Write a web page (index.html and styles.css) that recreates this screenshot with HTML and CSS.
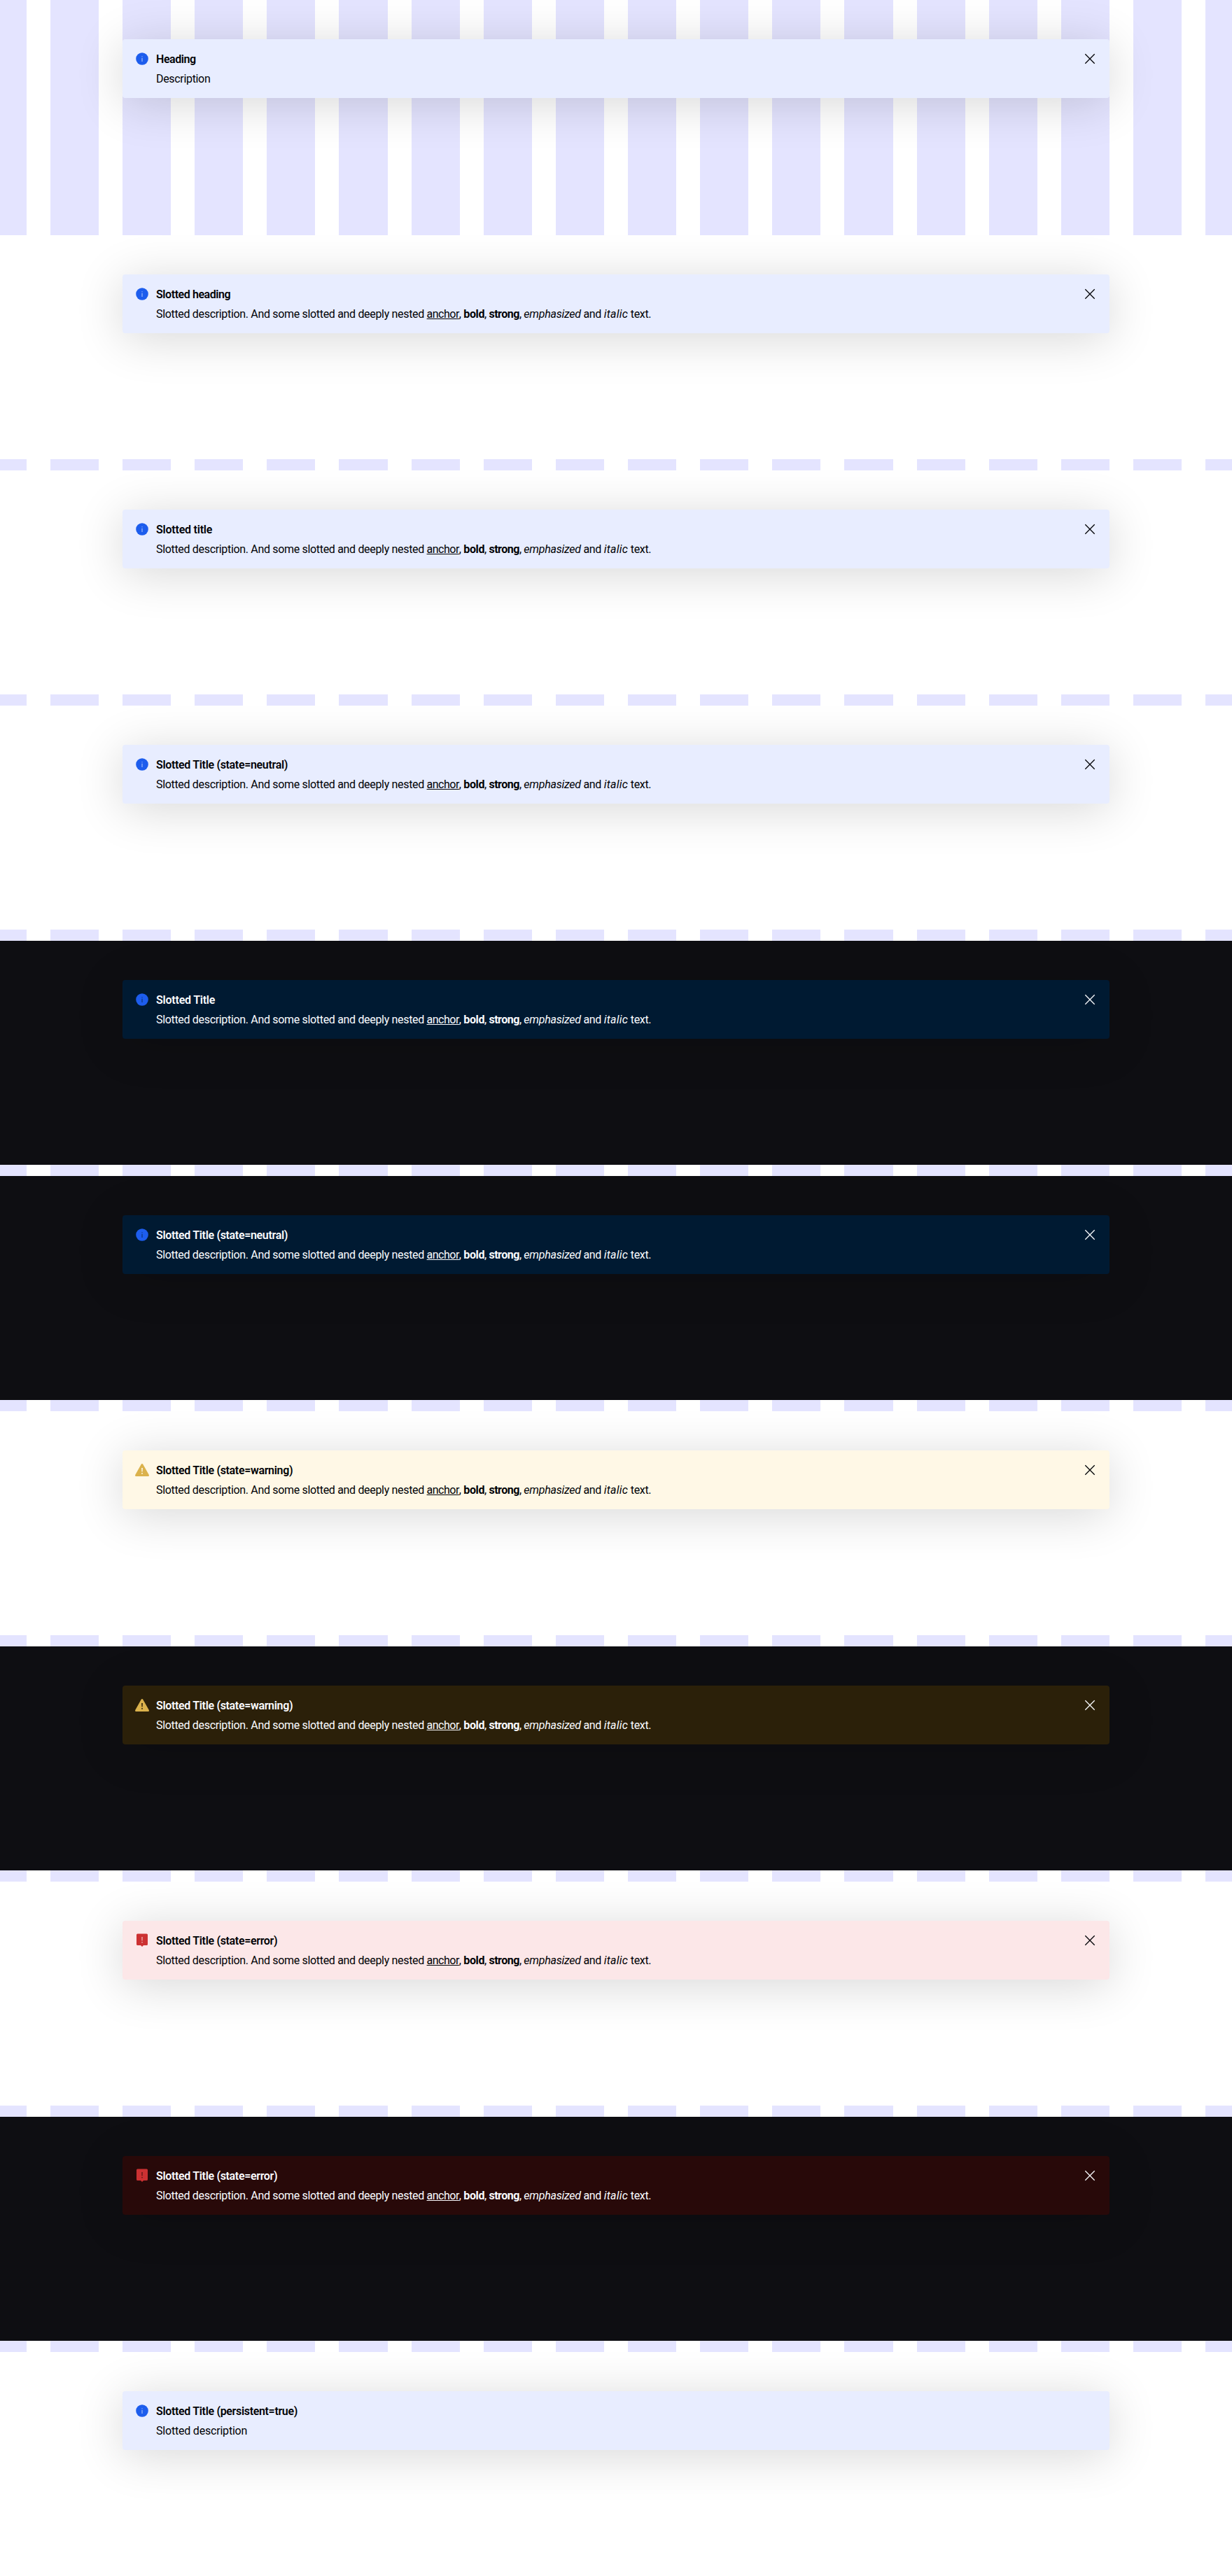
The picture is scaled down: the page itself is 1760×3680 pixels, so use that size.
FILE: index.html
```
<!DOCTYPE html>
<html lang="en">
<head>
<meta charset="utf-8">
<title>Banner</title>
<link rel="stylesheet" href="styles.css">
</head>
<body>
<svg class="sprite" aria-hidden="true">
  <symbol id="info" viewBox="0 0 24 24"><circle cx="12" cy="12" r="8.8"/><path class="mark thin" d="M11.500 10.700h1V16h-1zM11.500 8.200h1v1.100h-1z"/></symbol>
  <symbol id="warning" viewBox="0 0 24 24"><path d="M12 3q.8 0 1.200.7L21.800 19q.5 1.200-.5 2H2.700q-1-.8-.5-2L10.800 3.700Q11.200 3 12 3z"/><path class="mark" d="M11.100 9h1.800l-.3 5.500h-1.200zM11.200 16h1.600v1.700h-1.600z"/></symbol>
  <symbol id="error" viewBox="0 0 24 24"><path d="M5.500 2.500h13q1.500 0 1.500 1.500v13.500q0 1.500-1.500 1.500H14l-2 2-2-2H5.500Q4 19 4 17.500V4q0-1.500 1.500-1.500z"/><path class="mark" d="M11.500 7h1l-.1 5.500h-.8zM11.500 14h1v1.500h-1z"/></symbol>
  <symbol id="close" viewBox="0 0 24 24"><path d="M5.300 5.300 18.700 18.700M18.700 5.300 5.300 18.700" fill="none" stroke="currentColor" stroke-width="1.300"/></symbol>
</svg>
<div class="columns" aria-hidden="true"><i></i><i></i><i></i><i></i><i></i><i></i><i></i><i></i><i></i><i></i><i></i><i></i><i></i><i></i><i></i><i></i><i></i><i></i></div>
<main class="page">
  <section class="playground">
    <div class="banner neutral">
      <svg class="icon"><use href="#info"/></svg>
      <div class="text"><h5 class="title tight">Heading</h5><p class="description">Description</p></div>
      <button class="close" aria-label="Close"><svg class="icon"><use href="#close"/></svg></button>
    </div>
  </section>
  <section class="playground light">
    <div class="banner neutral">
      <svg class="icon"><use href="#info"/></svg>
      <div class="text"><h5 class="title tight">Slotted heading</h5><p class="description">Slotted description. And some slotted and deeply nested <a>anchor</a>, <b>bold</b>, <strong>strong</strong>, <em>emphasized</em> and <i>italic</i> text.</p></div>
      <button class="close" aria-label="Close"><svg class="icon"><use href="#close"/></svg></button>
    </div>
  </section>
  <section class="playground light">
    <div class="banner neutral">
      <svg class="icon"><use href="#info"/></svg>
      <div class="text"><h5 class="title loose">Slotted title</h5><p class="description">Slotted description. And some slotted and deeply nested <a>anchor</a>, <b>bold</b>, <strong>strong</strong>, <em>emphasized</em> and <i>italic</i> text.</p></div>
      <button class="close" aria-label="Close"><svg class="icon"><use href="#close"/></svg></button>
    </div>
  </section>
  <section class="playground light">
    <div class="banner neutral">
      <svg class="icon"><use href="#info"/></svg>
      <div class="text"><h5 class="title">Slotted Title (state=neutral)</h5><p class="description">Slotted description. And some slotted and deeply nested <a>anchor</a>, <b>bold</b>, <strong>strong</strong>, <em>emphasized</em> and <i>italic</i> text.</p></div>
      <button class="close" aria-label="Close"><svg class="icon"><use href="#close"/></svg></button>
    </div>
  </section>
  <section class="playground dark">
    <div class="banner neutral">
      <svg class="icon"><use href="#info"/></svg>
      <div class="text"><h5 class="title loose">Slotted Title</h5><p class="description">Slotted description. And some slotted and deeply nested <a>anchor</a>, <b>bold</b>, <strong>strong</strong>, <em>emphasized</em> and <i>italic</i> text.</p></div>
      <button class="close" aria-label="Close"><svg class="icon"><use href="#close"/></svg></button>
    </div>
  </section>
  <section class="playground dark">
    <div class="banner neutral">
      <svg class="icon"><use href="#info"/></svg>
      <div class="text"><h5 class="title">Slotted Title (state=neutral)</h5><p class="description">Slotted description. And some slotted and deeply nested <a>anchor</a>, <b>bold</b>, <strong>strong</strong>, <em>emphasized</em> and <i>italic</i> text.</p></div>
      <button class="close" aria-label="Close"><svg class="icon"><use href="#close"/></svg></button>
    </div>
  </section>
  <section class="playground light">
    <div class="banner warning">
      <svg class="icon"><use href="#warning"/></svg>
      <div class="text"><h5 class="title">Slotted Title (state=warning)</h5><p class="description">Slotted description. And some slotted and deeply nested <a>anchor</a>, <b>bold</b>, <strong>strong</strong>, <em>emphasized</em> and <i>italic</i> text.</p></div>
      <button class="close" aria-label="Close"><svg class="icon"><use href="#close"/></svg></button>
    </div>
  </section>
  <section class="playground dark">
    <div class="banner warning">
      <svg class="icon"><use href="#warning"/></svg>
      <div class="text"><h5 class="title">Slotted Title (state=warning)</h5><p class="description">Slotted description. And some slotted and deeply nested <a>anchor</a>, <b>bold</b>, <strong>strong</strong>, <em>emphasized</em> and <i>italic</i> text.</p></div>
      <button class="close" aria-label="Close"><svg class="icon"><use href="#close"/></svg></button>
    </div>
  </section>
  <section class="playground light">
    <div class="banner error">
      <svg class="icon"><use href="#error"/></svg>
      <div class="text"><h5 class="title">Slotted Title (state=error)</h5><p class="description">Slotted description. And some slotted and deeply nested <a>anchor</a>, <b>bold</b>, <strong>strong</strong>, <em>emphasized</em> and <i>italic</i> text.</p></div>
      <button class="close" aria-label="Close"><svg class="icon"><use href="#close"/></svg></button>
    </div>
  </section>
  <section class="playground dark">
    <div class="banner error">
      <svg class="icon"><use href="#error"/></svg>
      <div class="text"><h5 class="title">Slotted Title (state=error)</h5><p class="description">Slotted description. And some slotted and deeply nested <a>anchor</a>, <b>bold</b>, <strong>strong</strong>, <em>emphasized</em> and <i>italic</i> text.</p></div>
      <button class="close" aria-label="Close"><svg class="icon"><use href="#close"/></svg></button>
    </div>
  </section>
  <section class="playground light">
    <div class="banner neutral">
      <svg class="icon"><use href="#info"/></svg>
      <div class="text"><h5 class="title">Slotted Title (persistent=true)</h5><p class="description loose">Slotted description</p></div>
    </div>
  </section>
</main>
</body>
</html>
```
FILE: styles.css
```
body { margin: 0; background: #fff; color: #010205; font: 16px/24px Roboto, "Liberation Sans", sans-serif; }
.sprite { display: none; }
.columns { position: absolute; top: 0; left: 0; width: 100%; height: 3680px; z-index: -1; display: flex; gap: 34px; overflow: hidden; }
.columns i { flex: 0 0 69.143px; background: #e4e4ff; }
.columns i:first-child { margin-left: -31.286px; }
.page { display: flex; flex-direction: column; gap: 16px; }
.playground { height: 320px; box-sizing: border-box; padding: 56px 175px 0; }
.light { background: #fff; }
.dark { background: #0e0e12; color: #fbfcff; }
.banner { display: flex; gap: 8px; padding: 16px; height: 84px; box-sizing: border-box; border-radius: 4px; box-shadow: 0 8px 68px rgba(0, 0, 0, .16); background: var(--soft); }
.icon { display: block; width: 24px; height: 24px; flex: none; fill: var(--accent); }
.mark { fill: var(--soft); }
.thin { opacity: .75; }
.text { flex: 1; padding-top: 1px; white-space: nowrap; }
.title { margin: 0 0 4px; font-size: 16px; line-height: 24px; font-weight: 600; letter-spacing: -.33px; }
.title.tight { letter-spacing: -.43px; }
.title.loose { letter-spacing: -.22px; }
.description { margin: 0; letter-spacing: -.325px; }
.description.loose { letter-spacing: -.2px; }
.description a { color: inherit; text-decoration: underline; text-underline-offset: 1px; text-decoration-thickness: 1px; letter-spacing: -.5px; }
.description b { letter-spacing: -.4px; }
.description strong { letter-spacing: -.5px; }
.description em { letter-spacing: -.25px; }
.description i { letter-spacing: .25px; }
.neutral { --soft: #e8edff; --accent: #1d5ded; }
.warning { --soft: #fff8e6; --accent: #dbb24c; }
.error { --soft: #fce7e8; --accent: #cc3132; }
.dark .neutral { --soft: #001a32; }
.dark .warning { --soft: #2b2009; }
.dark .error { --soft: #280909; }
.close { padding: 0; border: 0; background: none; color: inherit; width: 24px; height: 24px; }
```
